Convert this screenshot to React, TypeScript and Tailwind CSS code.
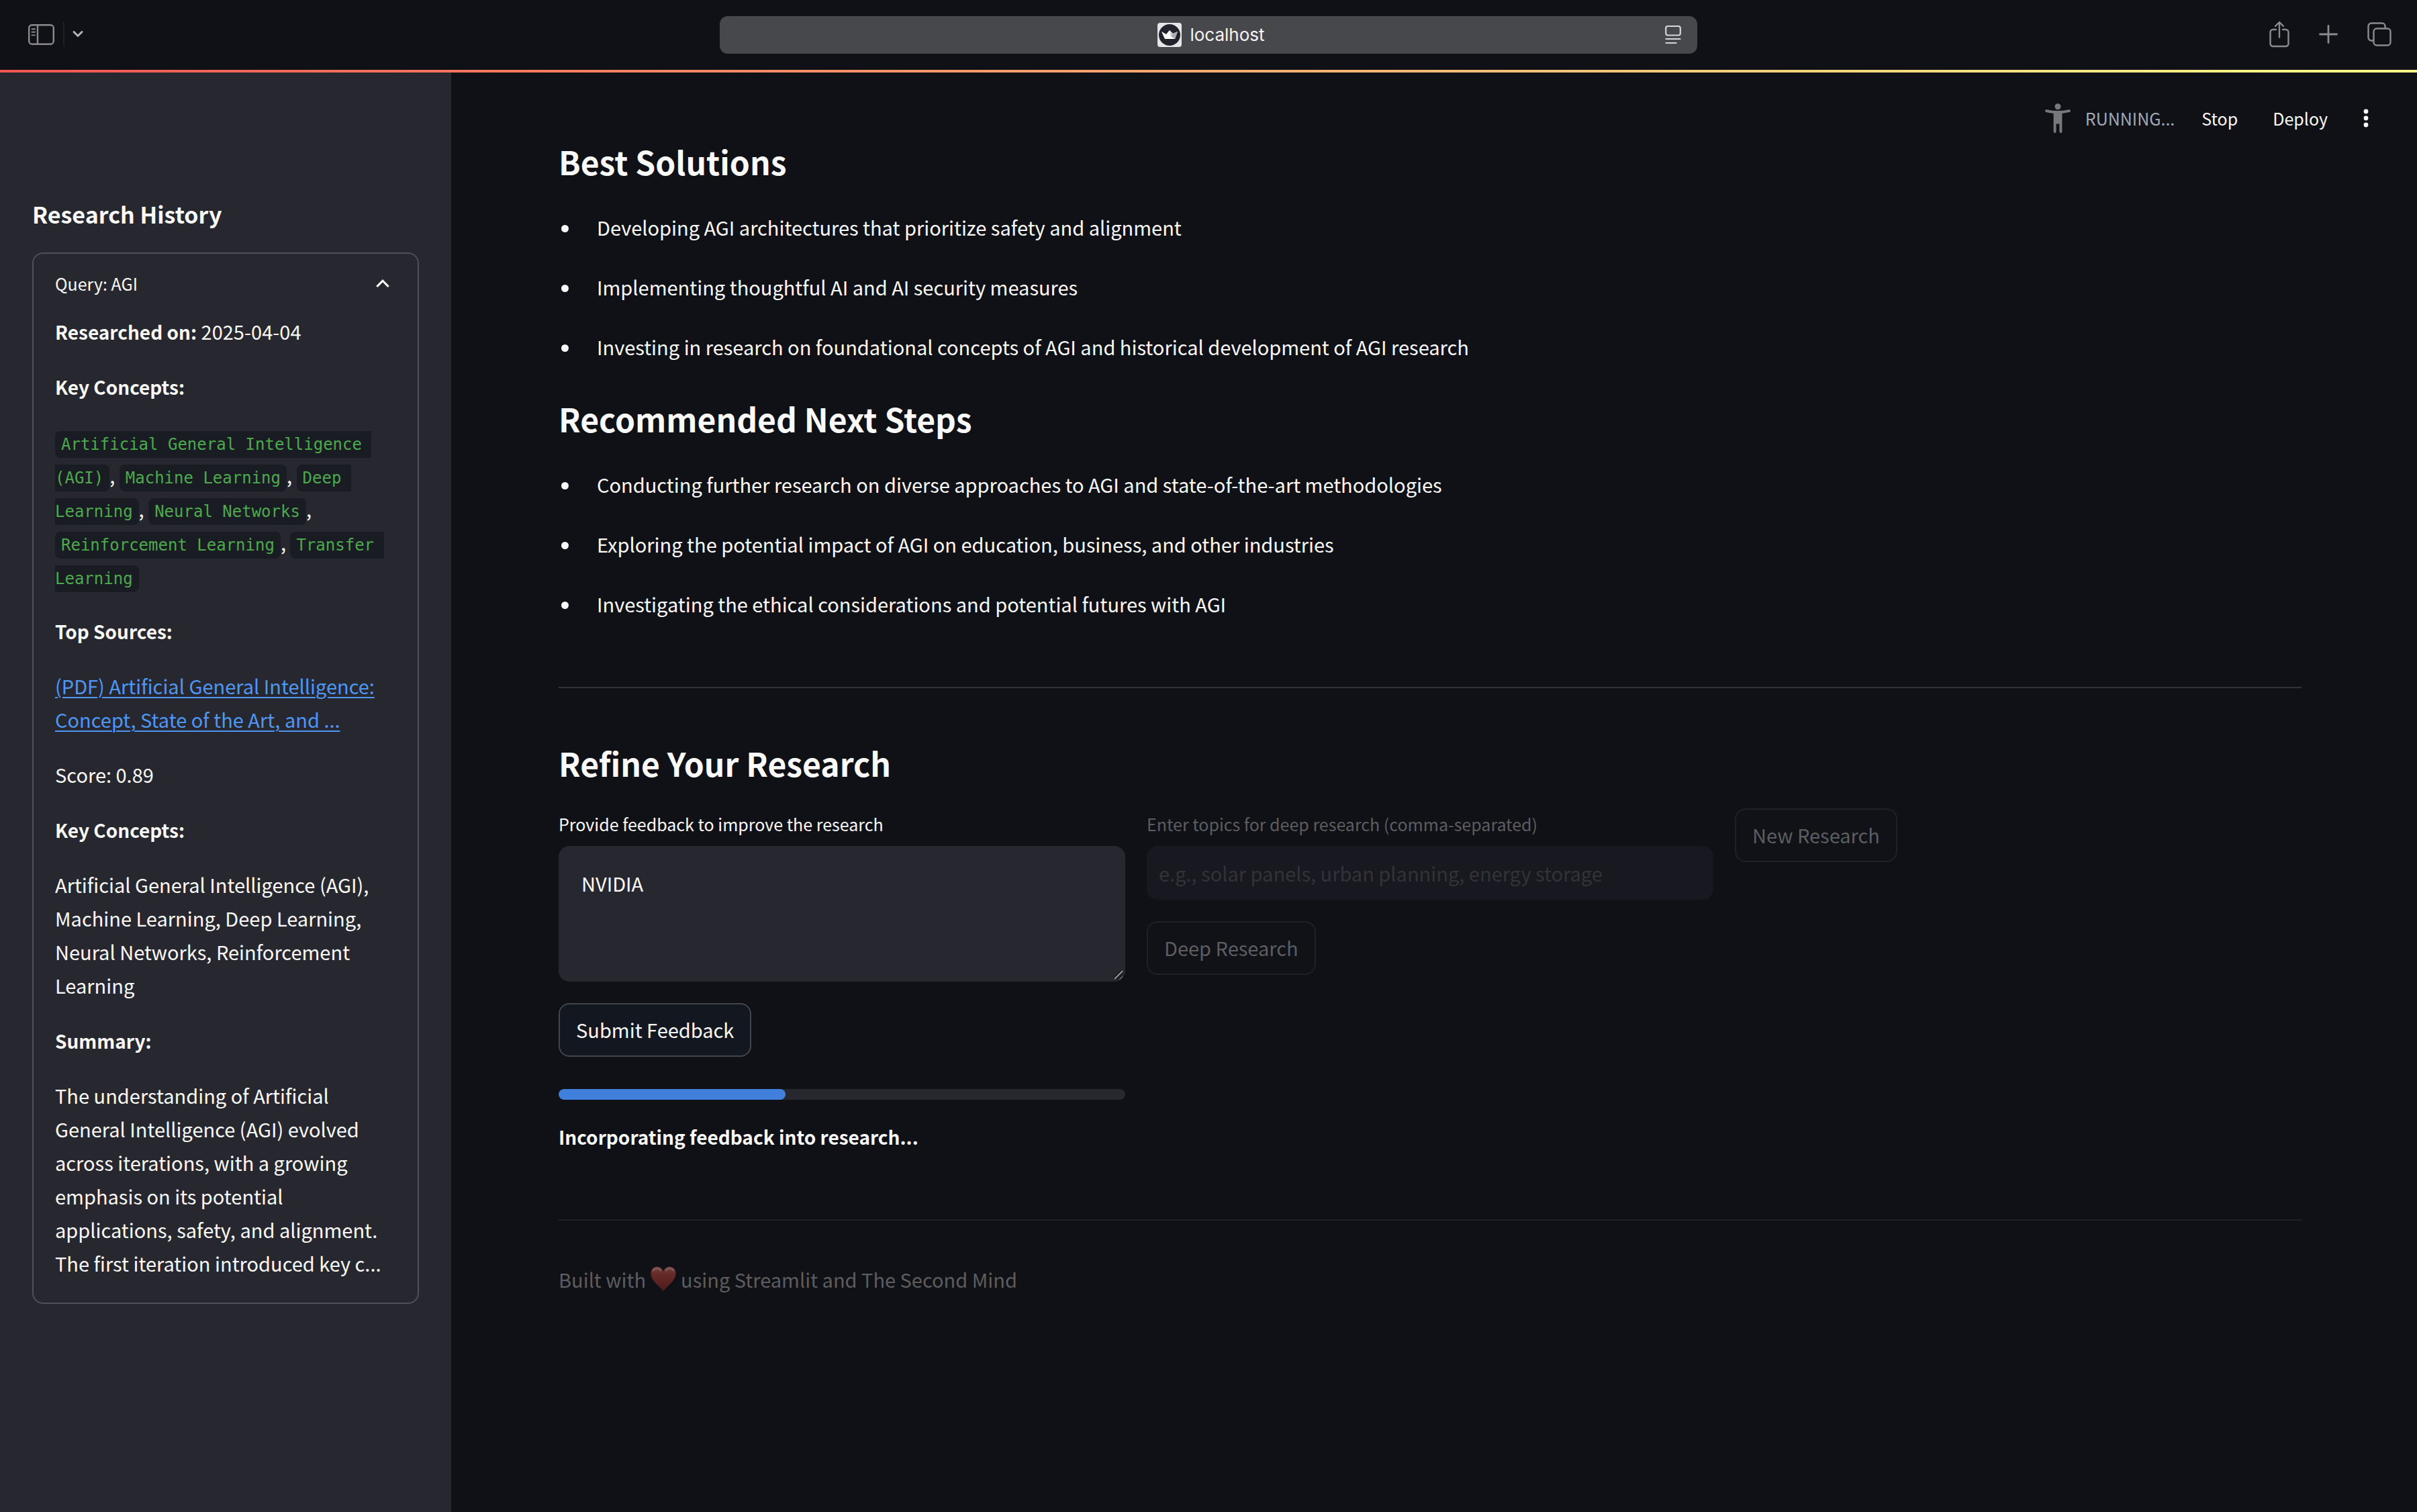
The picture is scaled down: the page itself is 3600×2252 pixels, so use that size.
import React from 'react';

const SOLUTIONS = [
  'Developing AGI architectures that prioritize safety and alignment',
  'Implementing thoughtful AI and AI security measures',
  'Investing in research on foundational concepts of AGI and historical development of AGI research',
];

const NEXT_STEPS = [
  'Conducting further research on diverse approaches to AGI and state-of-the-art methodologies',
  'Exploring the potential impact of AGI on education, business, and other industries',
  'Investigating the ethical considerations and potential futures with AGI',
];

const CONCEPTS = [
  'Artificial General Intelligence (AGI)',
  'Machine Learning',
  'Deep Learning',
  'Neural Networks',
  'Reinforcement Learning',
  'Transfer Learning',
];

const PROGRESS = 40;

function BrowserBar() {
  return (
    <header className="grid h-[104px] grid-cols-[1fr_1456px_1fr] items-center bg-[#101116] text-[#8b8b8d]">
      <div className="flex items-center pb-[2px] pl-[42px]">
        <button type="button" aria-label="Toggle sidebar">
          <svg width="39" height="31" viewBox="0 0 39 31" fill="none" stroke="currentColor" strokeWidth="2.4">
            <rect x="1.2" y="1.2" width="36.6" height="28.6" rx="4.5" />
            <path d="M14 1.2v28.6" />
            <path d="M5.5 7.2h4.6M5.5 11.8h4.6M5.5 16.4h4.6" strokeWidth="1.9" strokeLinecap="round" />
          </svg>
        </button>
        <span className="ml-[13px] h-9 w-[2px] bg-[#1f2024]" />
        <button type="button" aria-label="Tab groups" className="ml-3">
          <svg width="16" height="12" viewBox="0 0 16 12" fill="none" stroke="#b4b4b6" strokeWidth="3" strokeLinecap="round" strokeLinejoin="round">
            <path d="M2 2.5l6 6 6-6" />
          </svg>
        </button>
      </div>
      <div className="grid h-14 grid-cols-[1fr_auto_1fr] items-center rounded-xl bg-[#47484c]">
        <span />
        <div className="flex items-center gap-3 pl-2">
          <svg width="36" height="36" viewBox="0 0 36 36">
            <rect width="36" height="36" rx="4" fill="#e6e6e8" />
            <circle cx="18" cy="18" r="16" fill="#20232c" />
            <path d="M6 13l7 4 5-6 5 5 7-3-4 11H11z" fill="#fff" />
            <path d="M18 11l5 5-3 4z" fill="#cfd0d3" />
            <path d="M30 13l-7 3-3 4 6 4z" fill="#a9abb0" />
          </svg>
          <span className="font-['Inter',sans-serif] text-[26px] leading-9 text-[#f5f5f6]">localhost</span>
        </div>
        <button type="button" aria-label="Reader" className="mr-6 justify-self-end">
          <svg width="24" height="30" viewBox="0 0 24 30" fill="none" stroke="#d6d6d8" strokeWidth="2.2" strokeLinecap="round">
            <rect x="1.2" y="2" width="21.600" height="13.500" rx="3" />
            <path d="M1.500 21h21M1.500 27h15" />
          </svg>
        </button>
      </div>
      <div className="flex items-center justify-end pr-[38px] pb-[2px]">
        <button type="button" aria-label="Share" className="mr-11">
          <svg width="30" height="40" viewBox="0 0 30 40" fill="none" stroke="currentColor" strokeWidth="2.400" strokeLinecap="round" strokeLinejoin="round">
            <path d="M10 13H5.500A4 4 0 0 0 1.500 17v17a4 4 0 0 0 4 4h19a4 4 0 0 0 4-4V17a4 4 0 0 0-4-4H20" />
            <path d="M15 24.500V2M9 8l6-6 6 6" />
          </svg>
        </button>
        <button type="button" aria-label="New tab" className="mr-11">
          <svg width="28" height="28" viewBox="0 0 28 28" fill="none" stroke="currentColor" strokeWidth="2.800" strokeLinecap="round">
            <path d="M14 1.500v25M1.500 14h25" />
          </svg>
        </button>
        <button type="button" aria-label="Show tabs">
          <svg width="36" height="36" viewBox="0 0 36 36" fill="none" stroke="currentColor" strokeWidth="2.400">
            <rect x="9.500" y="9.500" width="25" height="25" rx="4.500" />
            <path d="M9.500 27.500H6a4.500 4.500 0 0 1-4.500-4.500V6A4.500 4.500 0 0 1 6 1.500h16A4.500 4.500 0 0 1 26.500 6v3.500" />
          </svg>
        </button>
      </div>
    </header>
  );
}

function Strong({ children }: { children: React.ReactNode }) {
  return <strong className="text-[28px] leading-none font-bold">{children}</strong>;
}

function Sidebar() {
  return (
    <aside className="w-[672px] shrink-0 bg-[#272730] px-12 pt-[187px]">
      <h2 className="text-[34px] leading-[48px] font-bold">Research History</h2>
      <section className="mt-[33px] rounded-2xl border-2 border-[#4f5057] px-8 pb-[34px]">
        <button type="button" aria-expanded="true" className="flex w-full items-center justify-between pt-[22px] pr-[10px] text-[25px] leading-[44px]">
          Query: AGI
          <svg width="20" height="14" viewBox="0 0 20 14" fill="none" stroke="currentColor" strokeWidth="3.200">
            <path d="M1.300 12L10 3.200 18.700 12" />
          </svg>
        </button>
        <div className="mt-6 space-y-8 text-[29px] leading-[50px]">
          <p>
            <Strong>Researched on:</Strong> 2025-04-04
          </p>
          <p>
            <Strong>Key Concepts:</Strong>
          </p>
          <p>
            {CONCEPTS.map((concept, i) => (
              <React.Fragment key={concept}>
                <code className="rounded-lg bg-[#1a1c24] px-[9px] py-[6px] font-['DejaVu_Sans_Mono',monospace] text-[24px] leading-none whitespace-pre-wrap text-[#4caa4c]">
                  {concept}
                </code>
                {i < CONCEPTS.length - 1 ? ', ' : ''}
              </React.Fragment>
            ))}
          </p>
          <p>
            <Strong>Top Sources:</Strong>
          </p>
          <p>
            <a href="#source" className="text-[#4e97f5] underline decoration-2 underline-offset-4">
              (PDF) Artificial General Intelligence: Concept, State of the Art, and ...
            </a>
          </p>
          <p>Score: 0.89</p>
          <p>
            <Strong>Key Concepts:</Strong>
          </p>
          <p>Artificial General Intelligence (AGI), Machine Learning, Deep Learning, Neural Networks, Reinforcement Learning</p>
          <p>
            <Strong>Summary:</Strong>
          </p>
          <p>
            The understanding of Artificial General Intelligence (AGI) evolved across iterations, with a growing emphasis on its
            potential applications, safety, and alignment. The first iteration introduced key c...
          </p>
        </div>
      </section>
    </aside>
  );
}

function Toolbar() {
  return (
    <div className="flex h-[98px] items-start justify-end pt-[46px] pr-[72px] text-[25px] leading-[44px]">
      <svg width="38" height="44" viewBox="0 0 38 44" fill="#77787b">
        <circle cx="19" cy="4.800" r="4.500" />
        <path d="M2.600 9.200Q19 13 35.400 9.200a2 2 0 0 1 .9 3.900Q31 14.300 25.400 14.900V42a2 2 0 0 1-4 0V30.500h-4.800V42a2 2 0 0 1-4 0V14.900Q7 14.300 1.700 13.100a2 2 0 0 1 .9-3.900z" />
      </svg>
      <span className="ml-[22px] text-[#a3a8b8]">RUNNING...</span>
      <button type="button" className="ml-10">
        Stop
      </button>
      <button type="button" className="ml-[52px]">
        Deploy
      </button>
      <button type="button" aria-label="Main menu" className="ml-[53px] flex h-11 items-center">
        <svg width="8" height="28" viewBox="0 0 8 28" fill="currentColor">
          <circle cx="4" cy="4" r="3.400" />
          <circle cx="4" cy="14" r="3.400" />
          <circle cx="4" cy="24" r="3.400" />
        </svg>
      </button>
    </div>
  );
}

function Heading({ children }: { children: React.ReactNode }) {
  return <h3 className="text-[48px] leading-[68px] font-semibold">{children}</h3>;
}

function BulletList({ items }: { items: string[] }) {
  return (
    <ul className="mt-[39px] space-y-[39px] text-[29px] leading-[50px]">
      {items.map((item) => (
        <li key={item} className="flex items-center gap-[42px] pl-1">
          <span className="mt-1 size-[11px] rounded-full bg-[#fafafa]" />
          {item}
        </li>
      ))}
    </ul>
  );
}

function Heart() {
  return (
    <svg width="38" height="38" viewBox="0 0 38 38" className="mx-[7px]" role="img" aria-label="love">
      <defs>
        <linearGradient id="heart" x1="0" y1="0" x2="0" y2="1">
          <stop offset="0" stopColor="#71423f" />
          <stop offset="0.3" stopColor="#662a27" />
          <stop offset="1" stopColor="#4f1a1b" />
        </linearGradient>
      </defs>
      <path d="M19 37.500C15 30 .5 23 .5 10.500 .5 4.500 4.500 .8 9.500 .8c4.500 0 8 2.700 9.500 7 1.500-4.300 5-7 9.500-7 5 0 9 3.700 9 9.700C37.500 23 23 30 19 37.500z" fill="url(#heart)" />
      <path d="M4 6.500C6 2.500 12.500 2 15 6.500M23 6.500C25.500 2 32 2.500 34 6.500" fill="none" stroke="#80615f" strokeWidth="2" strokeLinecap="round" />
    </svg>
  );
}

function RefineForm() {
  return (
    <div className="mt-[34px] grid grid-cols-3 items-start gap-8 text-[29px]">
      <form className="flex flex-col items-start" onSubmit={(e) => e.preventDefault()}>
        <label htmlFor="feedback" className="text-[25px] leading-[46px]">
          Provide feedback to improve the research
        </label>
        <div className="relative mt-[10px] flex w-full">
          <textarea
            id="feedback"
            defaultValue="NVIDIA"
            className="h-[202px] w-full resize-none rounded-2xl bg-[#272730] px-[34px] pt-[33px] leading-[44px] outline-none"
          />
          <svg width="16" height="16" viewBox="0 0 16 16" className="absolute right-[2px] bottom-[2px]" fill="none">
            <path d="M1 13L13 1M7.500 14.500l6-6" stroke="#0c0c10" strokeWidth="1.600" />
            <path d="M2 14L14 2" stroke="#c4c4c6" strokeWidth="1.500" />
            <path d="M9 15l5-5" stroke="#77777c" strokeWidth="1.200" />
          </svg>
        </div>
        <button type="submit" className="mt-8 h-20 rounded-2xl border-2 border-[#43454c] bg-[#131720] px-6">
          Submit Feedback
        </button>
        <div
          role="progressbar"
          aria-label="Feedback progress"
          aria-valuenow={PROGRESS}
          className="mt-12 h-4 w-full overflow-hidden rounded-lg bg-[#272730]"
        >
          <div className="h-full rounded-lg bg-[#4080dc]" style={{ width: `${PROGRESS}%` }} />
        </div>
        <p className="mt-[30px] text-[28px] leading-[50px] font-bold">Incorporating feedback into research...</p>
      </form>
      <form className="flex flex-col items-start text-[#5c5d60]" onSubmit={(e) => e.preventDefault()}>
        <label htmlFor="topics" className="text-[25px] leading-[46px]">
          Enter topics for deep research (comma-separated)
        </label>
        <input
          id="topics"
          type="text"
          disabled
          placeholder="e.g., solar panels, urban planning, energy storage"
          className="mt-[10px] h-20 w-full rounded-2xl bg-[#171820] px-[18px] placeholder:text-[#323337]"
        />
        <button type="submit" disabled className="mt-8 h-20 rounded-2xl border-2 border-[#1f2125] bg-[#111217] px-6">
          Deep Research
        </button>
      </form>
      <div className="text-[#5c5d60]">
        <button type="button" disabled className="h-20 rounded-2xl border-2 border-[#1f2125] bg-[#111217] px-6">
          New Research
        </button>
      </div>
    </div>
  );
}

export default function App() {
  return (
    <div className="flex min-h-screen flex-col bg-[#101116] font-['Noto_Sans_CJK_SC',sans-serif] text-[#fafafa]">
      <BrowserBar />
      <div className="h-1 bg-linear-to-r/srgb from-[#f05552] via-[#f9ab70] to-[#fffd8a]" />
      <div className="flex flex-1">
        <Sidebar />
        <div className="min-w-0 flex-1">
          <Toolbar />
          <main className="pr-[172px] pl-40">
            <Heading>Best Solutions</Heading>
            <BulletList items={SOLUTIONS} />
            <div className="mt-12">
              <Heading>Recommended Next Steps</Heading>
            </div>
            <BulletList items={NEXT_STEPS} />
            <hr className="mt-[99px] mb-[77px] border-t-2 border-[#333438]" />
            <Heading>Refine Your Research</Heading>
            <RefineForm />
            <hr className="mt-[98px] border-t-2 border-[#1e2025]" />
            <footer className="mt-[62px] flex items-center text-[29px] leading-[50px] text-[#5c5d60]">
              Built with
              <Heart />
              using Streamlit and The Second Mind
            </footer>
          </main>
        </div>
      </div>
    </div>
  );
}
